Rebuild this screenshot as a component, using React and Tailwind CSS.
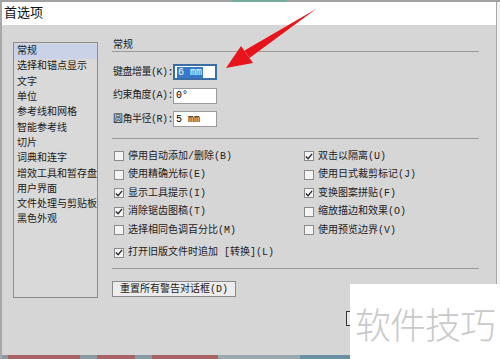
import React from "react";

const FONT = { fontFamily: '"Liberation Mono", "Noto Sans CJK SC", monospace' };

const navItems = [
  "常规",
  "选择和锚点显示",
  "文字",
  "单位",
  "参考线和网格",
  "智能参考线",
  "切片",
  "词典和连字",
  "增效工具和暂存盘",
  "用户界面",
  "文件处理与剪贴板",
  "黑色外观",
];

const leftChecks = [
  ["停用自动添加/删除(B)", false],
  ["使用精确光标(E)", false],
  ["显示工具提示(I)", true],
  ["消除锯齿图稿(T)", true],
  ["选择相同色调百分比(M)", false],
];

const rightChecks = [
  ["双击以隔离(U)", true],
  ["使用日式裁剪标记(J)", false],
  ["变换图案拼贴(F)", true],
  ["缩放描边和效果(O)", false],
  ["使用预览边界(V)", false],
];

function Box({ on }) {
  return (
    <span className="w-[10px] h-[10px] border border-[#8a8a8a] bg-[#f4f4f4] flex items-center justify-center shrink-0">
      {on && (
        <svg width="9" height="9" viewBox="0 0 9 9">
          <path d="M1 4.5 L3.5 7 L8 1.5" fill="none" stroke="#222" strokeWidth="1.4" />
        </svg>
      )}
    </span>
  );
}

function Check({ label, on }) {
  return (
    <div className="h-[18.5px] flex items-center gap-[4px] text-[10px] text-[#222]">
      <Box on={on} />
      <span>{label}</span>
    </div>
  );
}

function Field({ label, value, focus }) {
  return (
    <div className="flex items-center h-[16px]">
      <span className="w-[60px] text-[10px] text-[#222] tracking-[-0.5px]">{label}</span>
      <div
        className={`w-[44px] h-[16px] bg-white flex items-center px-[2px] text-[10px] ${
          focus ? "border-2 border-[#3a6ea5]" : "border border-[#9a9a9a]"
        }`}
      >
        {focus ? <span className="bg-[#3878c8] text-white px-[1px] leading-[11px]">{value}</span> : value}
      </div>
    </div>
  );
}

export default function App() {
  return (
    <div className="w-[500px] h-[359px] relative overflow-hidden bg-[#f2f2f2] flex flex-col" style={FONT}>
      {/* top edge */}
      <div className="h-[2px] flex shrink-0 bg-[#a2a2a2]">
        <div className="w-[232px]" />
        <div className="w-[55px] bg-[#74ab9c]" />
      </div>

      <div className="flex-1 flex flex-col w-[497px] border-r border-l-2 border-[#a8a8a8]">
        {/* title bar */}
        <div className="h-[23px] bg-white flex items-center px-[2px] text-[13px] text-[#111] shrink-0">首选项</div>

        {/* body */}
        <div className="flex-1 bg-[#d6d6d6] flex flex-col pl-[11px] pt-[17px]">
          <div className="flex">
            {/* list */}
            <div className="w-[85px] h-[256px] bg-[#d9d9d9] border border-[#8c8c8c] pt-[1px]">
              {navItems.map((t, i) => (
                <div
                  key={t}
                  className={`h-[15.3px] flex items-center pl-[3px] text-[10px] text-[#1a1a1a] ${
                    i === 0 ? "bg-[#c9d2e6]" : ""
                  }`}
                >
                  {t}
                </div>
              ))}
            </div>

            {/* right pane */}
            <div className="ml-[14px] w-[368px] flex flex-col">
              <div className="h-[10px] border-b border-[#9a9a9a] w-[367px] relative">
                <span className="absolute left-[1px] -top-[2px] text-[10px] text-[#1a1a1a] leading-[12px]">常规</span>
              </div>
              <div className="pl-[1px] mt-[12px] flex flex-col gap-[7.5px]">
                <Field label="键盘增量(K):" value="6 mm" focus />
                <Field label="约束角度(A):" value="0°" />
                <Field label="圆角半径(R):" value="5 mm" />
              </div>
              <div className="mt-[11px] border-b border-[#9a9a9a] w-[367px]" />

              <div className="mt-[8px] pl-[2px] flex">
                <div className="w-[190px]">
                  {leftChecks.map(([l, on]) => (
                    <Check key={l} label={l} on={on} />
                  ))}
                </div>
                <div>
                  {rightChecks.map(([l, on]) => (
                    <Check key={l} label={l} on={on} />
                  ))}
                </div>
              </div>
              <div className="pl-[2px] mt-[4px]">
                <Check label="打开旧版文件时追加 [转换](L)" on />
              </div>
              <div className="mt-[6px] border-b border-[#9a9a9a] w-[367px]" />

              <div className="mt-[12px]">
                <button className="w-[124px] h-[16px] border border-[#8a8a8a] bg-[#ececec] text-[10px] text-[#1a1a1a] flex items-center justify-center">
                  重置所有警告对话框(D)
                </button>
              </div>
            </div>
          </div>

          {/* bottom buttons (mostly hidden) */}
          <div className="flex mt-[13px] ml-[333px]">
            <div className="w-[60px] h-[15px] border border-[#333] bg-[#e8e8e8]" />
          </div>
        </div>

        {/* bottom strip */}
        <div className="h-[4px] shrink-0 flex bg-[#8a9aa2]">
          <div className="w-[6px]" />
          <div className="w-[72px] bg-[#a86464]" />
          <div className="w-[17px]" />
          <div className="w-[38px] bg-[#a86464]" />
          <div className="w-[17px]" />
          <div className="w-[66px] bg-[#a86464]" />
          <div className="w-[82px] bg-[#9aa8ae]" />
          <div className="w-[50px] bg-[#6a90a4]" />
        </div>
      </div>

      {/* red arrow annotation */}
      <svg className="absolute left-0 top-0" width="500" height="359" viewBox="0 0 500 359">
        <polygon points="226,68 241,46 253,63" fill="#e8141c" />
        <polygon points="249.5,58 244.5,50.5 316,9" fill="#e8141c" />
      </svg>

      {/* watermark */}
      <div className="absolute left-[350px] top-[284px] w-[150px] h-[75px] bg-white flex items-center justify-center">
        <span
          className="text-[36px] text-[#c9c9c9] font-light tracking-[-1px] mt-[2px]"
          style={{ fontFamily: '"Noto Sans CJK SC", sans-serif' }}
        >
          软件技巧
        </span>
      </div>
    </div>
  );
}
